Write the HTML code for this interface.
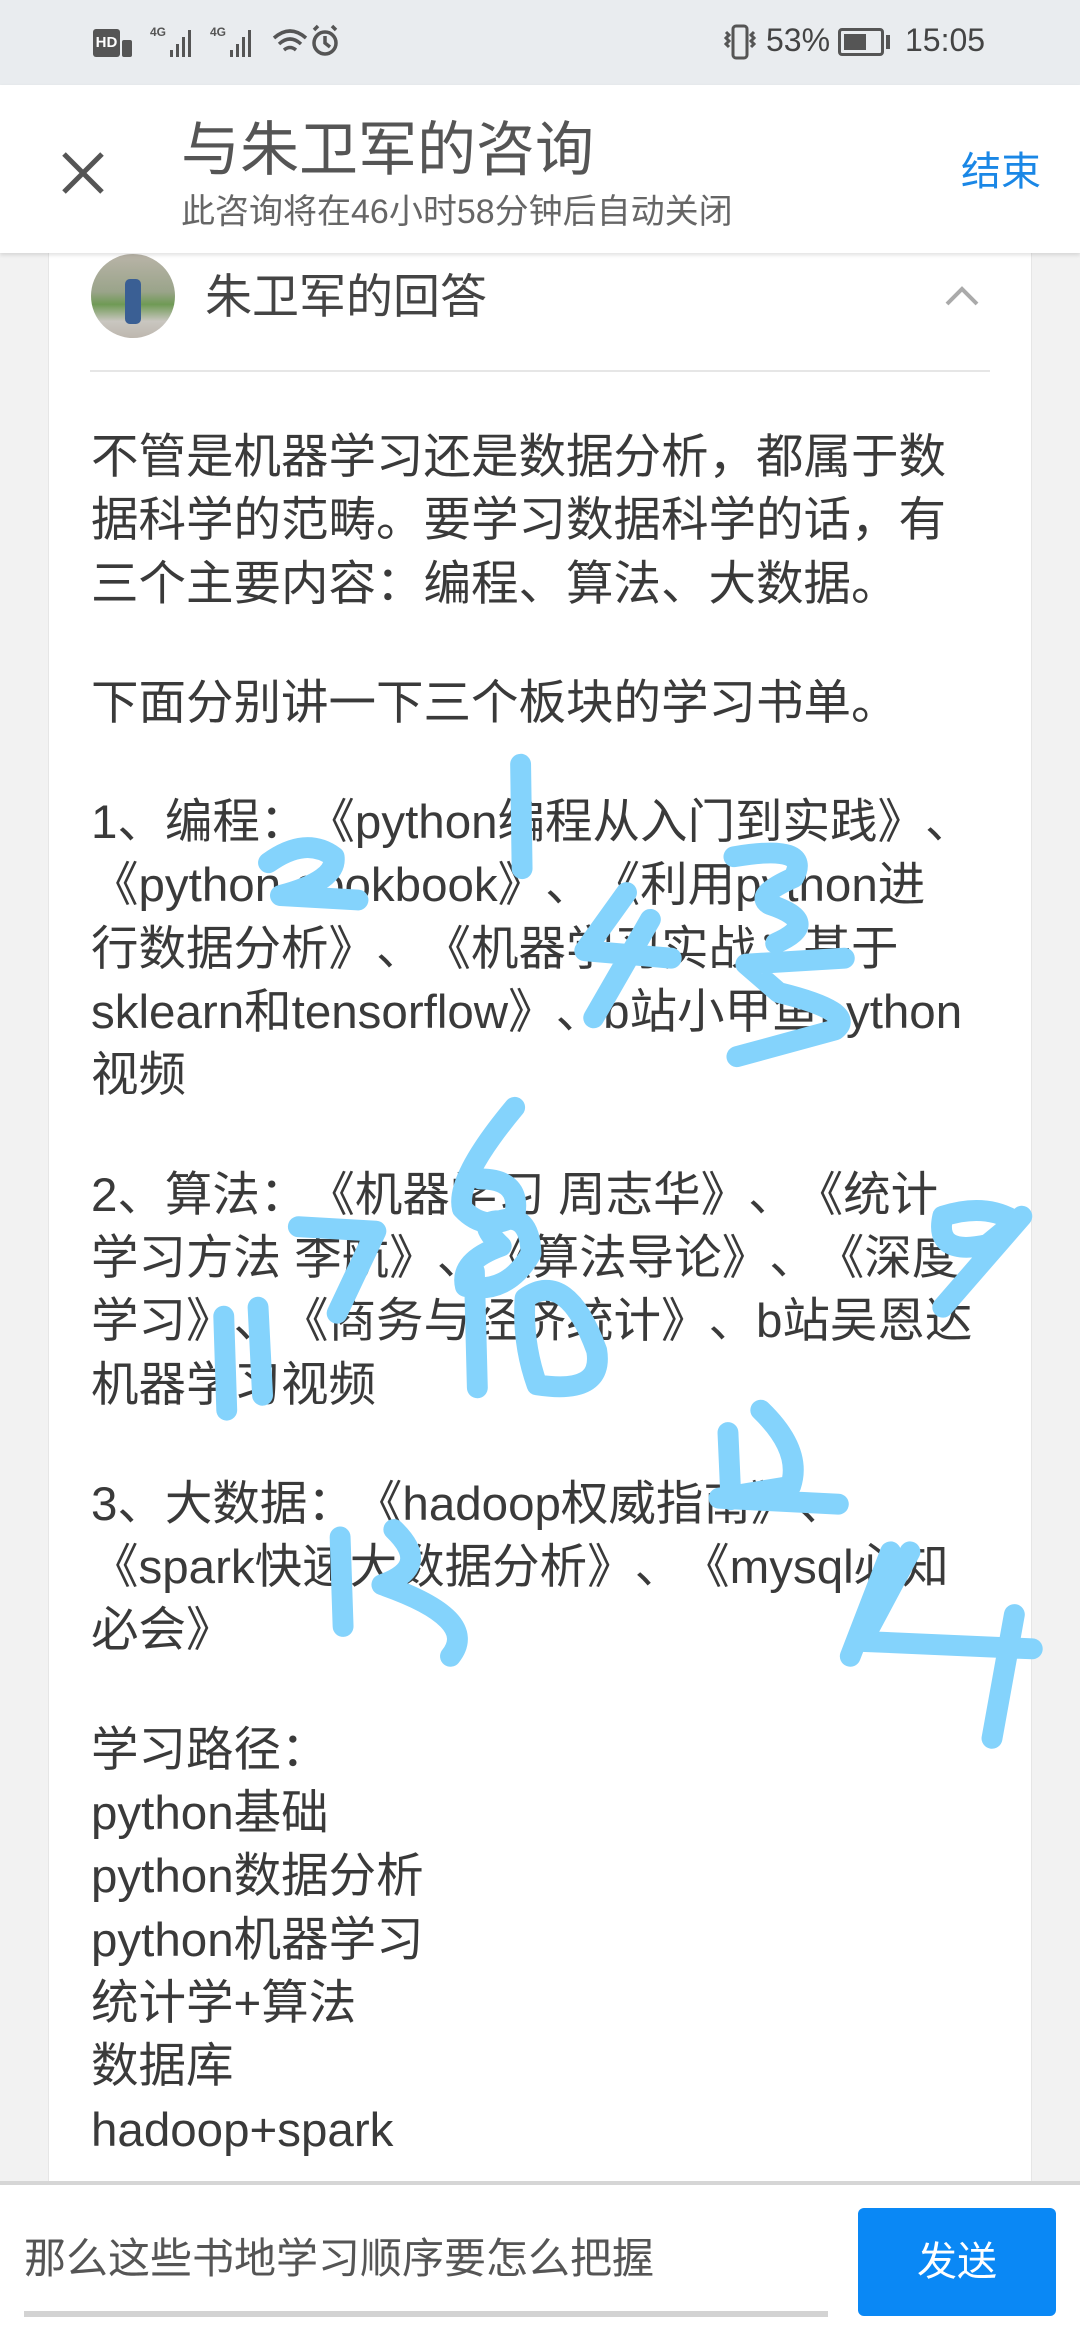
<!DOCTYPE html>
<html><head><meta charset="utf-8">
<style>
*{margin:0;padding:0;box-sizing:border-box}
body{width:1080px;height:2340px;position:relative;overflow:hidden;background:#f2f2f2;font-family:"Liberation Sans","Noto Sans CJK SC",sans-serif;color:#444;text-spacing-trim:space-all}
.abs{position:absolute}
#status{left:0;top:0;width:1080px;height:85px;background:#e9ecef}
#header{left:0;top:85px;width:1080px;height:168px;background:#fff;box-shadow:0 2px 4px rgba(0,0,0,.12);z-index:5}
#card{left:48px;top:253px;width:984px;height:1930px;background:#fff;border-left:1px solid #e6e6e6;border-right:1px solid #e6e6e6}
.body{left:91px;top:426px;font-size:47.5px;color:#3a3a3a;white-space:nowrap}
.body div{height:63.3px;line-height:63.3px;overflow:visible}
.body div.b{height:56px}
#bottom{left:0;top:2181px;width:1080px;height:159px;background:#fff;border-top:4px solid #d6d6d6;z-index:6}
</style></head><body>
<div id="status" class="abs">
  <div class="abs" style="left:93px;top:29px;width:27px;height:28px;background:#555;border-radius:3px;color:#fff;font-size:15px;font-weight:bold;line-height:28px;text-align:center">HD</div>
  <div class="abs" style="left:122px;top:40px;width:10px;height:17px;background:#555;border-radius:2px"></div>
  <svg class="abs" style="left:150px;top:22px" width="200" height="40" viewBox="0 0 200 40">
    <g fill="#555"><text x="0" y="14" font-size="12" font-family="Liberation Sans" font-weight="bold">4G</text>
    <rect x="20" y="28" width="3" height="7"/><rect x="26" y="22" width="3" height="13"/><rect x="32" y="15" width="3" height="20"/><rect x="38" y="8" width="3" height="27"/>
    <text x="60" y="14" font-size="12" font-family="Liberation Sans" font-weight="bold">4G</text>
    <rect x="80" y="28" width="3" height="7"/><rect x="86" y="22" width="3" height="13"/><rect x="92" y="15" width="3" height="20"/><rect x="98" y="8" width="3" height="27"/></g>
    <g fill="none" stroke="#555" stroke-width="3.5"><path d="M124 16 Q140 2 156 16"/><path d="M129 22 Q140 12 151 22"/><path d="M134 28 Q140 23 146 28"/>
    <circle cx="175" cy="21" r="11"/><path d="M175 14 V21 L180 25"/><path d="M164 8 L168 4 M186 8 L182 4"/></g>
  </svg>
  <svg class="abs" style="left:718px;top:22px" width="50" height="40"><g fill="none" stroke="#555" stroke-width="3"><rect x="15" y="4" width="14" height="32" rx="3"/><path d="M8 10 l3 3 -3 3 3 3 -3 3 3 3 M36 10 l-3 3 3 3 -3 3 3 3 -3 3"/></g></svg>
  <div class="abs" style="left:766px;top:22px;font-size:32px;color:#444">53%</div>
  <div class="abs" style="left:838px;top:28px;width:46px;height:28px;border:3px solid #555;border-radius:4px"><div style="margin:3px;width:22px;height:16px;background:#555"></div></div>
  <div class="abs" style="left:886px;top:35px;width:4px;height:14px;background:#555"></div>
  <div class="abs" style="left:905px;top:22px;font-size:32px;color:#444">15:05</div>
</div>
<div id="header" class="abs">
  <svg class="abs" style="left:60px;top:65px" width="46" height="46"><path d="M4 4 L42 42 M42 4 L4 42" stroke="#555" stroke-width="5"/></svg>
  <div class="abs" style="left:181px;top:28px;font-size:59px;color:#555;line-height:74px;white-space:nowrap">与朱卫军的咨询</div>
  <div class="abs" style="left:181px;top:105px;font-size:34px;color:#666;line-height:44px;white-space:nowrap">此咨询将在46小时58分钟后自动关闭</div>
  <div class="abs" style="left:961px;top:62px;font-size:40px;color:#1a87e6;line-height:50px">结束</div>
</div>
<div id="card" class="abs"></div>
<div class="abs" style="left:91px;top:254px;width:84px;height:84px;border-radius:50%;background:linear-gradient(180deg,#b9b4a8 0%,#9aa48a 45%,#6f9a55 60%,#c9c6c0 80%,#bdb7ae 100%);overflow:hidden"><div style="margin:25px 0 0 34px;width:16px;height:45px;background:#3a5f94;border-radius:5px"></div></div>
<div class="abs" style="left:205px;top:267px;font-size:47px;color:#444;line-height:60px;white-space:nowrap">朱卫军的回答</div>
<svg class="abs" style="left:944px;top:285px" width="36" height="22"><path d="M3 19 L18 4 L33 19" fill="none" stroke="#aaa" stroke-width="4"/></svg>
<div class="abs" style="left:90px;top:370px;width:900px;height:2px;background:#e6e6e6"></div>
<div class="abs body">
<div>不管是机器学习还是数据分析，都属于数</div>
<div>据科学的范畴。要学习数据科学的话，有</div>
<div>三个主要内容：编程、算法、大数据。</div>
<div class="b"></div>
<div>下面分别讲一下三个板块的学习书单。</div>
<div class="b"></div>
<div>1、编程：《python编程从入门到实践》、</div>
<div>《python cookbook》、《利用python进</div>
<div>行数据分析》、《机器学习实战：基于</div>
<div>sklearn和tensorflow》、b站小甲鱼python</div>
<div>视频</div>
<div class="b"></div>
<div>2、算法：《机器学习 周志华》、《统计</div>
<div>学习方法 李航》、《算法导论》、《深度</div>
<div>学习》、《商务与经济统计》、b站吴恩达</div>
<div>机器学习视频</div>
<div class="b"></div>
<div>3、大数据：《hadoop权威指南》、</div>
<div>《spark快速大数据分析》、《mysql必知</div>
<div>必会》</div>
<div class="b"></div>
<div>学习路径：</div>
<div>python基础</div>
<div>python数据分析</div>
<div>python机器学习</div>
<div>统计学+算法</div>
<div>数据库</div>
<div>hadoop+spark</div>
</div>
<svg class="abs" style="left:0;top:0;z-index:4" width="1080" height="2340" viewBox="0 0 724 1568">
<g fill="none" stroke="#84d3fc" stroke-width="14" stroke-linecap="round" stroke-linejoin="round">
<path d="M349 512 L350 582"/>
<path d="M180 578 Q205 560 224 574 Q226 590 188 600 L240 603"/>
<path d="M420 598 L392 637 L450 642 M436 616 L398 682"/>
<path d="M492 574 Q545 565 532 588 Q505 600 516 606 Q552 618 520 632"/>
<path d="M566 642 L500 646 L522 665 Q575 678 560 690 L494 708"/>
<path d="M345 742 Q305 790 310 810 Q325 826 345 815 Q350 790 322 790"/>
<path d="M200 822 L252 825 L226 880"/>
<path d="M335 818 Q355 812 356 840 Q340 868 312 862 Q308 845 336 835 Q318 818 335 818"/>
<path d="M680 818 Q660 806 632 815 Q626 842 662 834 L685 815 L632 876"/>
<path d="M318 852 L320 930"/>
<path d="M352 870 Q380 850 400 905 Q405 935 360 928 Q350 900 352 870"/>
<path d="M150 882 L152 945 M173 876 L176 935"/>
<path d="M488 960 L490 1005"/>
<path d="M510 945 Q538 972 530 996 L482 1004 L562 1008"/>
<path d="M228 1030 L230 1090"/>
<path d="M264 1025 Q290 1050 256 1062 Q322 1085 302 1110"/>
<path d="M597 1040 L570 1110"/>
<path d="M610 1040 L578 1100 L692 1105 M680 1082 L665 1165"/>
</g></svg>
<div id="bottom" class="abs">
  <div class="abs" style="left:24px;top:44px;font-size:42px;color:#555;line-height:60px;white-space:nowrap">那么这些书地学习顺序要怎么把握</div>
  <div class="abs" style="left:24px;top:126px;width:804px;height:6px;background:#d3d3d3"></div>
  <div class="abs" style="left:858px;top:23px;width:198px;height:108px;background:#0a88f5;border-radius:6px;color:#fff;font-size:40px;line-height:108px;text-align:center">发送</div>
</div>
</body></html>
